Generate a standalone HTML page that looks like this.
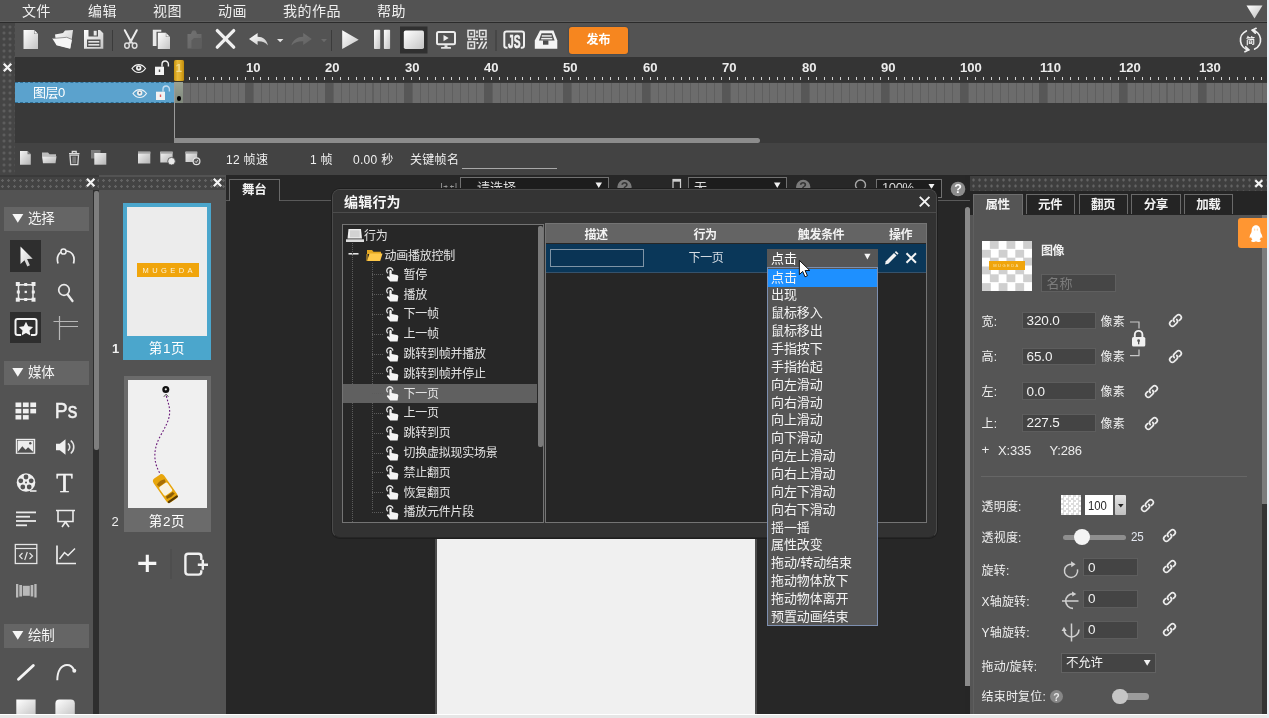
<!DOCTYPE html>
<html lang="zh-CN">
<head>
<meta charset="utf-8">
<title>Mugeda</title>
<style>
*{box-sizing:border-box;margin:0;padding:0}
html,body{width:1269px;height:718px;overflow:hidden;background:#262626}
body{filter:blur(.55px);font-family:"Liberation Sans","Noto Sans CJK SC",sans-serif;font-size:12px;color:#e6e6e6;position:relative}
.a{position:absolute}
.t{position:absolute;white-space:nowrap;line-height:1}
svg{position:absolute;overflow:visible}
/* dotted grip pattern */
.dots{background-color:#454545;background-image:radial-gradient(circle at 1.500px 1.500px,#636363 1px,transparent 1.500px);background-size:6px 6px}
.mn{top:4px;font-size:14px;color:#f0f0f0;letter-spacing:0.5px}
.fl{top:60.500px;font-size:13.500px;font-weight:bold;color:#ececec;transform:scaleX(.97);transform-origin:0 0}
.tb2{top:153.500px;font-size:12px;color:#f0f0f0;letter-spacing:0.3px}
.sh{left:4px;width:85px;height:24px;background:#656565}
.sht{left:28px;font-size:13.500px;color:#f4f4f4;letter-spacing:-0.3px}
.sb{background:#1d1d1d;border:1px solid #707070}
.q{width:14px;text-align:center;font-size:12.500px;font-weight:bold}
.ti{font-size:12px;color:#e4e4e4;letter-spacing:-0.25px}
.hd{height:1px;background:repeating-linear-gradient(90deg,#5c5c5c 0,#5c5c5c 1px,transparent 1px,transparent 2px)}
.vd{width:1px;background:repeating-linear-gradient(#5c5c5c 0,#5c5c5c 1px,transparent 1px,transparent 2px)}
.th{top:229px;width:60px;text-align:center;font-size:12px;font-weight:bold;color:#f2f2f2;letter-spacing:-0.4px}
.op{left:767.500px;width:109.500px;height:17.860px;line-height:17.500px;padding-left:3.500px;font-size:13px;color:#f4f4f4;white-space:nowrap;letter-spacing:-0.1px}
.op.sel{background:#1e90ff;height:18.500px}
.pl{left:981.500px;font-size:12px;color:#efefef;letter-spacing:0.2px}
.pin{background:#444;border:1px solid #5d5d5d}
.pv{font-size:13.500px;color:#f2f2f2;letter-spacing:-0.1px}
</style>
</head>
<body>
<!-- ===== MENU BAR ===== -->
<div class="a" id="menubar" style="left:0;top:0;width:1267px;height:23px;background:#535353;border-bottom:1px solid #2b2b2b;box-shadow:inset 0 -2px 0 -1px #5e5e5e"></div>
<div class="t mn" style="left:22px">文件</div>
<div class="t mn" style="left:88px">编辑</div>
<div class="t mn" style="left:153px">视图</div>
<div class="t mn" style="left:218px">动画</div>
<div class="t mn" style="left:283px">我的作品</div>
<div class="t mn" style="left:377px">帮助</div>
<svg style="left:1246px;top:5px" width="17" height="14" viewBox="0 0 17 14"><defs><linearGradient id="gw" x1="0" y1="0" x2="1" y2="1"><stop offset="0" stop-color="#fff"/><stop offset="1" stop-color="#bdbdbd"/></linearGradient></defs><path d="M0.5 0.5h16L8.5 13.5z" fill="url(#gw)"/></svg>
<!-- ===== TOOLBAR ===== -->
<div class="a" id="toolbar" style="left:0;top:23px;width:1267px;height:34px;background:#535353"></div>
<svg id="tbicons" style="left:0;top:23px" width="1267" height="34" viewBox="0 23 1267 34">
<defs>
<linearGradient id="gi" x1="0" y1="0" x2="1" y2="1"><stop offset="0" stop-color="#ffffff"/><stop offset="0.5" stop-color="#e2e2e2"/><stop offset="1" stop-color="#c4c4c4"/></linearGradient>
<linearGradient id="gd" x1="0" y1="0" x2="1" y2="1"><stop offset="0" stop-color="#737373"/><stop offset="1" stop-color="#636363"/></linearGradient>
</defs>
<!-- new -->
<path d="M23.5 30h10.5l4 4v15h-14.5z" fill="url(#gi)"/><path d="M34 30v4h4z" fill="#8a8a8a"/><path d="M34.6 30.4l3 3.2h-3z" fill="#f4f4f4"/>
<!-- open -->
<path d="M55 34.5l8-1.5 2-2.500 8-0.5-2.500 18.500-14-3.500z" fill="url(#gi)"/><path d="M52.300 38.500l14.500-1.200 5.200 2.200-2 9.200-13.500-3.400z" fill="#f6f6f6"/><path d="M52.300 38.500l14.500-1.200 5.200 2.200" fill="none" stroke="#8a8a8a" stroke-width="0.900"/>
<!-- save -->
<path d="M84 30h16l3.300 3.300v15.400h-19.300z" fill="url(#gi)"/><rect x="88.500" y="30" width="9.500" height="6.500" fill="#535353"/><rect x="93.700" y="30.800" width="3" height="4.700" fill="#e8e8e8"/><rect x="87" y="39.500" width="13.500" height="7.500" fill="#535353"/><rect x="88.300" y="41" width="11" height="1.600" fill="#e0e0e0"/><rect x="88.300" y="44" width="11" height="1.600" fill="#e0e0e0"/>
<rect x="112" y="30" width="1" height="21" fill="#3b3b3b"/>
<!-- scissors -->
<path d="M124.800 30.200l6.600 12.300M136.800 30.200l-6.600 12.300" stroke="#ececec" stroke-width="2" fill="none" stroke-linecap="round"/><ellipse cx="127" cy="45.600" rx="2.300" ry="2.600" fill="none" stroke="#dcdcdc" stroke-width="1.500"/><ellipse cx="134.600" cy="45.600" rx="2.300" ry="2.600" fill="none" stroke="#dcdcdc" stroke-width="1.500"/><path d="M128.600 43.500l2.200-2.500 2.200 2.500" stroke="#dcdcdc" stroke-width="1.400" fill="none"/>
<!-- copy -->
<path d="M152.800 29.700h8.500v2h-4.800v14.300h-3.700z" fill="#e9e9e9"/><path d="M157.800 32.800h8l4.200 4.200v12h-12.200z" fill="url(#gi)"/><path d="M165.800 32.800v4.200h4.200z" fill="#8a8a8a"/><path d="M166.400 33.400l3 3h-3z" fill="#f2f2f2"/>
<!-- paste (disabled) -->
<path d="M187.500 34h3.500l1-2.800h4l1 2.800h4.500v14.500h-14z" fill="url(#gd)"/><rect x="192.500" y="30.500" width="3" height="2" fill="#6c6c6c"/><path d="M194 38h7v10.500h-9.500v-8z" fill="#5d5d5d"/>
<!-- delete X -->
<path d="M217.300 30.600l16.400 16.600M233.700 30.600l-16.400 16.600" stroke="#f0f0f0" stroke-width="3.300" stroke-linecap="round"/>
<!-- undo -->
<path d="M249 39l8.600-5.900v3.700c5.400 0 9.300 3 10.300 8.600-2.600-3.100-5.700-4.300-10.300-4.100v3.800z" fill="url(#gi)"/>
<path d="M277 39h6.400l-3.200 3.300z" fill="#e4e4e4"/>
<!-- redo (disabled) -->
<path d="M311.800 39l-8.600-5.900v3.700c-5.400 0-10.300 3-11.800 8.600 3.100-3.100 7.200-4.300 11.800-4.100v3.800z" fill="url(#gd)"/>
<path d="M321 39h6l-3 3.200z" fill="#6a6a6a"/>
<rect x="331" y="30" width="1" height="21" fill="#3b3b3b"/>
<!-- play -->
<path d="M342.200 30.300l16.500 9.400-16.500 9.400z" fill="url(#gi)"/>
<!-- pause -->
<rect x="374" y="29.700" width="6.200" height="19.400" rx="0.800" fill="url(#gi)"/><rect x="383.900" y="29.700" width="6.200" height="19.400" rx="0.800" fill="url(#gi)"/>
<!-- stop -->
<rect x="400" y="26.500" width="27.500" height="27" fill="#303030"/><rect x="403.800" y="30.600" width="20.200" height="18.500" rx="1.800" fill="url(#gi)"/>
<!-- preview -->
<rect x="437" y="32" width="18" height="12.200" rx="1.500" fill="none" stroke="#ececec" stroke-width="2"/><path d="M443.500 35l5.200 3.100-5.200 3.100z" fill="#ececec"/><rect x="444.500" y="45.200" width="3" height="1.800" fill="#e4e4e4"/><rect x="441" y="47" width="10" height="1.700" rx="0.500" fill="#e4e4e4"/>
<!-- qr -->
<g fill="none" stroke="#e6e6e6" stroke-width="1.500"><rect x="468" y="30.400" width="6.500" height="6.500"/><rect x="479.500" y="30.400" width="6.500" height="6.500"/><rect x="468" y="42" width="6.500" height="6.500"/></g>
<g fill="#e6e6e6"><rect x="470.300" y="32.700" width="2" height="2"/><rect x="481.800" y="32.700" width="2" height="2"/><rect x="470.300" y="44.300" width="2" height="2"/><rect x="476.200" y="30.500" width="1.600" height="3"/><rect x="476.200" y="35" width="1.600" height="2"/><rect x="468" y="38.400" width="3.500" height="1.700"/><rect x="473" y="38.400" width="5" height="1.700"/><rect x="480" y="38.400" width="3" height="1.700"/><rect x="484.500" y="38.400" width="2.300" height="1.700"/><path d="M477.500 48.700l4-7.200h2l-4 7.200zM481.500 48.700l4-7.200h1.500v1l-3.500 6.200zM485.300 48.700l1.500-3v3z"/><rect x="476.500" y="42" width="2" height="2"/></g>
<rect x="495.500" y="30" width="1" height="21" fill="#3b3b3b"/>
<!-- JS -->
<path d="M507.500 47.700h-1q-2.200 0-2.200-2.200v-11.700q0-2.200 2.200-2.200h15.300q2.200 0 2.200 2.200v11.700q0 2.200-2.200 2.200h-1" fill="none" stroke="#efefef" stroke-width="2"/>
<text transform="translate(514.300 48.200) scale(.55 1)" text-anchor="middle" font-family="Liberation Sans,sans-serif" font-weight="bold" font-size="18.500" fill="#f2f2f2" stroke="#f2f2f2" stroke-width="0.700">JS</text>
<!-- drawer -->
<path d="M540 30.600h13.500l3.800 10v8.100h-22.500v-8.100z" fill="#f4f4f4"/><path d="M541.500 33.300h10.500l2.600 7.300h-15.700z" fill="#535353"/><rect x="541.800" y="35.200" width="9.900" height="1.500" fill="#ececec"/><rect x="541.200" y="37.900" width="11.100" height="1.500" fill="#ececec"/><rect x="543" y="40.400" width="5.400" height="4.300" fill="#4c4c4c"/>
<!-- right: simplified/traditional toggle -->
<g fill="none" stroke="#f0f0f0" stroke-width="1.700" stroke-linecap="round" stroke-linejoin="round"><path d="M1246.300 30.900A10 10 0 0 0 1248.760 49.850"/><path d="M1254.700 49.100A10 10 0 0 0 1252.240 30.150"/><path d="M1244.900 51.700L1248.760 49.850L1245.700 46.800"/><path d="M1256.100 28.300L1252.240 30.150L1255.300 33.200"/></g>
<text x="1250.600" y="43.600" text-anchor="middle" font-family="Liberation Sans,Noto Sans CJK SC,sans-serif" font-size="9" font-weight="bold" fill="#f0f0f0">简</text>
</svg>
<div class="a" style="left:569px;top:26.500px;width:59px;height:27px;background:#f6861f;border-radius:3px;box-shadow:0 0 2px rgba(30,40,60,.6)"></div>
<div class="t" style="left:569px;top:34px;width:59px;text-align:center;font-size:12px;font-weight:bold;color:#fff">发布</div>
<!-- ===== TIMELINE ===== -->
<div class="a" id="timeline" style="left:0;top:57px;width:1267px;height:86px;background:#393939"></div>
<div class="a" style="left:15px;top:57px;width:1252px;height:25px;background:#343434"></div>
<div class="a" style="left:15px;top:102px;width:159px;height:41px;background:#393939"></div>
<!-- ticks -->
<div class="a" style="left:189.400px;top:77px;width:1077.600px;height:3px;background:repeating-linear-gradient(90deg,#d2d2d2 0,#d2d2d2 1px,transparent 1px,transparent 7.940px)"></div>
<div class="t fl" style="left:245.8px">10</div><div class="t fl" style="left:325.2px">20</div><div class="t fl" style="left:404.6px">30</div><div class="t fl" style="left:484.0px">40</div><div class="t fl" style="left:563.4px">50</div><div class="t fl" style="left:642.8px">60</div><div class="t fl" style="left:722.2px">70</div><div class="t fl" style="left:801.6px">80</div><div class="t fl" style="left:881.0px">90</div><div class="t fl" style="left:960.4px">100</div><div class="t fl" style="left:1039.8px">110</div><div class="t fl" style="left:1119.2px">120</div><div class="t fl" style="left:1198.6px">130</div>

<!-- frames row -->
<div class="a" style="left:174px;top:82.500px;width:1093px;height:20px;background:repeating-linear-gradient(90deg,#5f5f5f 0,#5f5f5f 1px,#6c6c6c 1px,#6c6c6c 7.940px)"></div>
<div class="a" style="left:174px;top:82.500px;width:1093px;height:20px;background:repeating-linear-gradient(90deg,transparent 0,transparent 71.460px,#575757 71.460px,#575757 79.400px)"></div>
<div class="a" style="left:175px;top:82px;width:8px;height:21px;background:linear-gradient(#9aa394,#7e877b)"></div>
<div class="a" style="left:176.500px;top:96px;width:4.500px;height:4.500px;border-radius:50%;background:#000"></div>
<div class="a" style="left:174px;top:82px;width:1px;height:61px;background:#9a9a9a"></div>
<!-- layer row -->
<div class="a" style="left:15px;top:82px;width:159px;height:21px;background:#5ba2cd;border-top:1px dashed #2f6f96;border-bottom:1px dashed #2f6f96"></div>
<div class="t" style="left:33px;top:86px;font-size:13px;color:#fff;letter-spacing:-0.5px">图层0</div>
<!-- playhead -->
<div class="a" style="left:174px;top:60px;width:9.500px;height:21px;background:linear-gradient(90deg,#c8940f,#e8b93a 35%,#e2b02c 60%,#c08c0c);border-radius:1.500px;box-shadow:0 0 1px #6b5208"></div>
<div class="t" style="left:174px;top:63px;width:9.500px;text-align:center;font-size:11px;color:#f3dc8e;font-weight:bold">1</div>
<!-- close + eye/lock icons -->
<svg style="left:0;top:57px" width="180" height="50" viewBox="0 57 180 50">
<g id="eye"><path d="M132 68.500c3.500-5.300 10-5.300 13.500 0-3.500 5.300-10 5.300-13.500 0z" fill="none" stroke="#f0f0f0" stroke-width="1.200"/><circle cx="138.700" cy="68" r="2.700" fill="#f0f0f0"/><circle cx="138.700" cy="67.800" r="1" fill="#333"/></g>
<g id="lock"><rect x="155" y="66.700" width="9" height="8.300" fill="#f2f2f2"/><path d="M162 66.700v-2.500a3.200 3.200 0 0 1 6.400 0v2.300" fill="none" stroke="#f2f2f2" stroke-width="1.400"/><rect x="158.800" y="69.500" width="1.400" height="2.500" fill="#555"/></g>
<g transform="translate(1,25)"><path d="M132 68.500c3.500-5.300 10-5.300 13.500 0-3.500 5.300-10 5.300-13.500 0z" fill="none" stroke="#e8f0f6" stroke-width="1.200"/><circle cx="138.700" cy="68" r="2.700" fill="#f0f0f0"/><circle cx="138.700" cy="67.800" r="1" fill="#567"/></g>
<g transform="translate(1,25)"><rect x="155" y="66.700" width="9" height="8.300" fill="#f2f2f2"/><path d="M162 66.700v-2.500a3.200 3.200 0 0 1 6.400 0v2.300" fill="none" stroke="#c4dcf0" stroke-width="1.400"/><rect x="158.800" y="69.500" width="1.400" height="2.500" fill="#e05a5a"/></g>
</svg>
<!-- h scrollbar -->
<div class="a" style="left:174px;top:138px;width:586px;height:5px;background:#8c8c8c;border-radius:0 3px 3px 0"></div>
<!-- bottom bar -->
<div class="a" id="tlbar" style="left:0;top:143px;width:1267px;height:32px;background:#434343"></div>
<div class="a dots" style="left:0;top:23px;width:15px;height:152px;background-position:2.500px 2.500px"></div>
<svg style="left:0;top:60px" width="15" height="15" viewBox="0 60 15 15"><path d="M3.800 63.800l7.400 7.400M11.200 63.800l-7.400 7.400" stroke="#f4f4f4" stroke-width="2.300"/></svg>
<!-- timeline bottom bar content -->
<svg style="left:0;top:143px" width="220" height="32" viewBox="0 143 220 32">
<defs><linearGradient id="gs" x1="0" y1="0" x2="1" y2="1"><stop offset="0" stop-color="#f4f4f4"/><stop offset="1" stop-color="#b4b4b4"/></linearGradient></defs>
<path d="M20 151h7.500l3.300 3.300v10.500h-10.800z" fill="url(#gs)"/><path d="M27.500 151v3.300h3.300z" fill="#777"/>
<path d="M42 152.500h6l1.500 1.700h6.500v2h-14z" fill="#bdbdbd"/><path d="M42 156.200h14.500l-1 7h-12.500z" fill="url(#gs)"/>
<path d="M69 153.600h10.500M72.300 153.300v-1.800h3.900v1.800" fill="none" stroke="#dadada" stroke-width="1.300"/><path d="M70 155.200h8.500l-0.700 9.500h-7.100z" fill="none" stroke="#dadada" stroke-width="1.300"/><rect x="72.300" y="156.500" width="3.900" height="7" fill="#777"/>
<rect x="91" y="150" width="9.500" height="8.500" fill="#7c7c7c"/><rect x="94.300" y="153" width="12" height="11.700" fill="url(#gs)"/>
<rect x="138" y="151.700" width="12.300" height="11.800" fill="url(#gs)"/><rect x="138" y="151.700" width="12.300" height="2" fill="#a5a5a5"/>
<rect x="160.300" y="151.700" width="12.300" height="10.800" fill="url(#gs)"/><rect x="160.300" y="151.700" width="12.300" height="2" fill="#a5a5a5"/><circle cx="171.500" cy="161.200" r="3.800" fill="#e8e8e8" stroke="#474747" stroke-width="0.800"/>
<rect x="185.500" y="151.700" width="11.700" height="10.300" fill="url(#gs)"/><rect x="185.500" y="151.700" width="11.700" height="2" fill="#a5a5a5"/><circle cx="196.500" cy="161.200" r="3.400" fill="#555" stroke="#e2e2e2" stroke-width="1.200"/><path d="M195 161.300l1.200 1.200 1.800-2.600" fill="none" stroke="#ddd" stroke-width="0.900"/>
</svg>
<div class="t tb2" style="left:226px">12 帧速</div>
<div class="t tb2" style="left:310px">1 帧</div>
<div class="t tb2" style="left:353px">0.00 秒</div>
<div class="t tb2" style="left:410px">关键帧名</div>
<div class="a" style="left:462px;top:168px;width:95px;height:1px;background:#a8a8a8"></div>
<!-- ===== MAIN ===== -->
<div class="a" id="main" style="left:0;top:175px;width:1267px;height:540px;background:#262626"></div>
<!-- left tool panel -->
<div class="a" style="left:0;top:175px;width:99px;height:540px;background:#3a3a3a"></div>
<div class="a dots" style="left:0;top:176.500px;width:99px;height:13.500px;background-color:#434343;background-position:1px 2px"></div>
<div class="a" style="left:0;top:190px;width:93px;height:525px;background:#535353"></div>
<div class="a" style="left:93px;top:190px;width:6px;height:525px;background:#2e2e2e"></div><div class="a" style="left:93.500px;top:191px;width:5px;height:258.500px;background:#7e7e7e;border-radius:2px"></div>
<div class="a sh" style="top:207px"></div><div class="t sht" style="top:212px">选择</div>
<div class="a sh" style="top:361px"></div><div class="t sht" style="top:366px">媒体</div>
<div class="a sh" style="top:624px"></div><div class="t sht" style="top:629px">绘制</div>
<div class="a" style="left:10px;top:240px;width:31px;height:32px;background:#2e2e2e"></div>
<div class="a" style="left:10px;top:312px;width:31px;height:31px;background:#2e2e2e"></div>
<svg id="tools" style="left:0;top:176px" width="99" height="539" viewBox="0 176 99 539">
<g stroke="#f4f4f4" stroke-width="2.200"><path d="M87 178.800l7.400 7.400M94.400 178.800l-7.400 7.400"/></g>
<g fill="#f6f6f6"><path d="M12.300 214h11l-5.500 8.800z"/><path d="M12.300 368h11l-5.500 8.800z"/><path d="M12.300 631h11l-5.500 8.800z"/></g>
<!-- arrow -->
<path d="M20.500 246.500v17.500l4-3.800 2.800 6.300 2.600-1.200-2.800-6.200 5.600-0.300z" fill="url(#gi)"/>
<!-- node tool -->
<path d="M58 263.500c-2-7 1-12.500 7.500-12.500s10 5 8 12.500" fill="none" stroke="#eee" stroke-width="1.700"/><circle cx="63.500" cy="251.500" r="2.600" fill="#535353" stroke="#eee" stroke-width="1.500"/>
<!-- transform -->
<rect x="18.500" y="284.800" width="14.500" height="14.500" fill="none" stroke="#eee" stroke-width="1.500"/><g fill="#eee"><rect x="15.800" y="282" width="4" height="4"/><rect x="31.500" y="282" width="4" height="4"/><rect x="15.800" y="297.700" width="4" height="4"/><rect x="31.500" y="297.700" width="4" height="4"/><rect x="24.200" y="283" width="3" height="3"/><rect x="24.200" y="298" width="3" height="3"/><rect x="16.800" y="290.500" width="3" height="3"/><rect x="31.800" y="290.500" width="3" height="3"/><rect x="24.600" y="290.800" width="2.300" height="2.300"/></g>
<!-- magnifier -->
<circle cx="64" cy="290" r="5.300" fill="none" stroke="#eaeaea" stroke-width="1.700"/><path d="M67.800 294.800l4.700 6.200" stroke="#eaeaea" stroke-width="2.300" stroke-linecap="round"/>
<!-- star frame -->
<path d="M21 319h-3.500q-2 0-2 2v12q0 2 2 2h3.500M31 319h3.500q2 0 2 2v12q0 2-2 2h-3.500" fill="none" stroke="#f2f2f2" stroke-width="2"/><path d="M20 319h12" stroke="#f2f2f2" stroke-width="2"/><path d="M26 321.800l2.200 4.500 4.900 0.700-3.600 3.500 0.900 4.900-4.400-2.300-4.400 2.300 0.900-4.900-3.600-3.500 4.900-0.700z" fill="#f4f4f4"/>
<!-- guides -->
<path d="M59.500 316v24M53.500 321.500h24.500M59.500 326.500h18.500" fill="none" stroke="#b8b8b8" stroke-width="1.200"/>
<!-- grid -->
<g fill="#f0f0f0"><rect x="15.500" y="402.500" width="5.800" height="4.600"/><rect x="22.900" y="402.500" width="5.800" height="4.600"/><rect x="30.300" y="402.500" width="5.800" height="4.600"/><rect x="15.500" y="408.800" width="5.800" height="4.600"/><rect x="22.900" y="408.800" width="5.800" height="4.600"/><rect x="30.300" y="408.800" width="5.800" height="4.600"/><rect x="15.500" y="415.100" width="5.800" height="4.400"/><rect x="22.900" y="415.100" width="5.800" height="4.400"/></g>
<text transform="translate(54.800 418) scale(.9 1)" font-family="Liberation Sans,sans-serif" font-size="21.500" fill="#f0f0f0" stroke="#f0f0f0" stroke-width="0.500">Ps</text>
<!-- image -->
<rect x="15.800" y="438.800" width="19.400" height="15" fill="#ededed"/><path d="M17.500 452.200l4.800-6 3.300 3.600 2.500-2.500 5.500 4.900z" fill="#4f4f4f"/><rect x="17.300" y="440.300" width="16.400" height="12" fill="none" stroke="#4f4f4f" stroke-width="0.600"/><circle cx="30.300" cy="443.300" r="1.200" fill="#4f4f4f"/>
<!-- sound -->
<path d="M56 443.800h3.800l5.700-4.600v15.600l-5.700-4.600h-3.800z" fill="#f0f0f0"/><path d="M68 443.300a4.800 4.800 0 0 1 0 7.400M70.800 440.500a8.600 8.600 0 0 1 0 13" fill="none" stroke="#e6e6e6" stroke-width="1.600"/>
<!-- film reel -->
<circle cx="26" cy="482.500" r="9.300" fill="#f0f0f0"/><g fill="#535353"><circle cx="26" cy="477" r="2.400"/><circle cx="20.800" cy="480.800" r="2.400"/><circle cx="31.200" cy="480.800" r="2.400"/><circle cx="22.800" cy="487" r="2.400"/><circle cx="29.200" cy="487" r="2.400"/><circle cx="26" cy="482.500" r="1"/></g><path d="M30 491h6.500" stroke="#f0f0f0" stroke-width="1.600"/>
<text x="56.300" y="491.600" font-family="Liberation Serif,serif" font-size="27" fill="#f2f2f2" stroke="#f2f2f2" stroke-width="0.400">T</text>
<!-- text lines -->
<g fill="#eaeaea"><rect x="16" y="511.500" width="20" height="1.800"/><rect x="16" y="515.800" width="14" height="1.800"/><rect x="16" y="520.100" width="20" height="1.800"/><rect x="16" y="524.400" width="11" height="1.800"/></g>
<!-- presentation -->
<path d="M56 510.500h19M58 511v10.500h15v-10.500M62 527l3.500-5 3.500 5" fill="none" stroke="#ececec" stroke-width="1.600"/>
<!-- code -->
<rect x="15.300" y="544.500" width="21.500" height="19" fill="none" stroke="#e4e4e4" stroke-width="1.300"/><path d="M15.300 548.500h21.500" stroke="#e4e4e4" stroke-width="1.200"/><path d="M22.500 553l-3 3 3 3M29.500 553l3 3-3 3M27.300 552l-2.600 8" fill="none" stroke="#e4e4e4" stroke-width="1.200"/>
<!-- chart -->
<path d="M57 545.500v18h19" fill="none" stroke="#ececec" stroke-width="1.700"/><path d="M59.500 559l5-6.500 3.500 3 7-7" fill="none" stroke="#ececec" stroke-width="1.500"/>
<!-- film strip -->
<g fill="#b9b9b9"><rect x="16" y="584" width="2.300" height="13.500"/><rect x="19.300" y="585" width="2.700" height="11.500"/><rect x="22.800" y="585.800" width="7" height="10"/><rect x="30.600" y="585" width="2.700" height="11.500"/><rect x="34.300" y="584" width="2.300" height="13.500"/></g>
<!-- line / curve -->
<path d="M18.500 679.300l14.800-13.800" stroke="#f4f4f4" stroke-width="2.900" stroke-linecap="round"/>
<path d="M57.300 680.300c0-9.500 4-15.300 9.700-15.300 3.500 0 5.800 2 7 5.300" fill="none" stroke="#f0f0f0" stroke-width="1.900"/><circle cx="74.300" cy="670.800" r="2" fill="#f0f0f0"/>
<rect x="16.300" y="699.500" width="19.300" height="16" fill="url(#gi)"/><path d="M55.400 715.500v-12q0-4 4-4h11.400q4 0 4 4v12z" fill="url(#gi)"/>
</svg>
<!-- pages panel -->
<div class="a" style="left:99px;top:175px;width:127px;height:540px;background:#535353"></div>
<div class="a dots" style="left:99px;top:176.500px;width:126px;height:13.500px;background-color:#434343;background-position:3px 2px"></div>
<svg style="left:212px;top:177px" width="12" height="12" viewBox="0 0 12 12"><path d="M1.800 1.800l7.400 7.400M9.200 1.800l-7.400 7.400" stroke="#f4f4f4" stroke-width="2.200"/></svg>
<!-- page 1 -->
<div class="a" style="left:123px;top:203px;width:88px;height:157px;background:#4ba6cc"></div>
<div class="a" style="left:127px;top:207px;width:80px;height:129px;background:#ececec"></div>
<div class="a" style="left:136.500px;top:263px;width:62.500px;height:14px;background:#f0a50c"></div>
<div class="t" style="left:136.500px;top:266.500px;width:62.500px;text-align:center;font-size:7.500px;letter-spacing:3.400px;color:#fdf3d6;padding-left:3px">MUGEDA</div>
<div class="t" style="left:123px;top:342px;width:88px;text-align:center;font-size:13.500px;color:#fff;letter-spacing:0.6px">第1页</div>
<div class="t" style="left:112px;top:342px;font-size:13px;font-weight:bold;color:#f0f0f0">1</div>
<!-- page 2 -->
<div class="a" style="left:123.500px;top:376px;width:87px;height:155.500px;background:#6b6b6b"></div>
<div class="a" style="left:127.500px;top:380px;width:79px;height:127.500px;background:#f0f0f0"></div>
<svg style="left:127px;top:379px" width="80" height="129" viewBox="127 379 80 129">
<circle cx="165.800" cy="389.500" r="3.500" fill="#111"/><circle cx="165.800" cy="389.300" r="1.100" fill="#eee"/>
<path d="M166.300 396c1.500 6 3.800 11 3.300 17.500-0.500 7.500-5 14.500-9.500 23-4 7.500-6 15-5 23 0.500 5 2.500 10 5.500 15" fill="none" stroke="#6a1a7a" stroke-width="1.100" stroke-dasharray="1.800 1.800"/>
<path d="M163.800 396.800l2.300-2.600 2.300 2.600" fill="none" stroke="#222" stroke-width="0.800"/>
<g transform="rotate(-35 165.300 488.500)"><rect x="158.800" y="474" width="13" height="29" rx="3.500" fill="#e8a60c"/><rect x="160.300" y="484" width="10" height="10.500" rx="1.500" fill="#f8f3e2"/><path d="M160.500 480.500q4.800-2.200 9.600 0l-0.800 3h-8z" fill="#a87006"/><path d="M161.300 495.500h8l0.800 2.600q-4.800 1.600-9.600 0z" fill="#8d5f05"/><rect x="159.300" y="500.500" width="12" height="2.300" rx="1" fill="#5a3c04"/></g>
</svg>
<div class="t" style="left:123px;top:515px;width:88px;text-align:center;font-size:13.500px;color:#fff;letter-spacing:0.6px">第2页</div>
<div class="t" style="left:111.500px;top:515px;font-size:13px;color:#f0f0f0">2</div>
<svg style="left:130px;top:545px" width="85" height="40" viewBox="130 545 85 40">
<path d="M147.300 554.800v17.200M138.300 563.400h18" stroke="#f6f6f6" stroke-width="3.100"/>
<path d="M171 549v30" stroke="#4a4a4a" stroke-width="1"/>
<path d="M201.300 560v-3.500q0-2.800-2.800-2.800h-10.300q-2.800 0-2.800 2.800v15.300q0 2.800 2.800 2.800h10.300q2.800 0 2.800-2.800v-1.500" fill="none" stroke="#f0f0f0" stroke-width="2.400"/><path d="M202.800 559.800v10M197.800 564.800h10.200" stroke="#f0f0f0" stroke-width="2.400"/>
</svg>
<!-- ===== STAGE ===== -->
<div class="a" style="left:226px;top:175px;width:739px;height:540px;background:#272727"></div>
<div class="a" style="left:226px;top:199.500px;width:744px;height:1px;background:#5a5a5a"></div>
<div class="a" style="left:229px;top:179px;width:50.500px;height:21.500px;background:#272727;border:1px solid #696969;border-bottom:none"></div>
<div class="t" style="left:229px;top:184px;width:50.500px;text-align:center;font-size:12.500px;font-weight:bold;color:#f2f2f2;letter-spacing:-0.3px">舞台</div>
<!-- stage toolbar -->
<div class="a sb" style="left:460px;top:177px;width:149px;height:22px"></div>
<div class="t" style="left:477px;top:180.500px;font-size:13px;color:#dcdcdc">请选择</div>
<div class="a sb" style="left:688px;top:177px;width:99px;height:22px"></div>
<div class="t" style="left:694px;top:180.500px;font-size:13px;color:#dcdcdc">无</div>
<div class="a sb" style="left:876px;top:179px;width:66px;height:19px"></div>
<div class="t" style="left:882px;top:181px;font-size:13px;color:#dcdcdc;letter-spacing:-0.4px">100%</div>
<svg style="left:440px;top:176px" width="530" height="24" viewBox="440 176 530 24">
<path d="M441.500 183v7M456 183v7M443.500 186.500h4M450 186.500h4" stroke="#8a8a8a" stroke-width="1"/>
<path d="M446.500 185l-2 1.500 2 1.500zM451 185l2 1.500-2 1.500z" fill="#9a9a9a"/>
<rect x="673" y="179.500" width="7.500" height="12" fill="none" stroke="#cfcfcf" stroke-width="1.200"/><rect x="673" y="179.500" width="7.500" height="2.200" fill="#cfcfcf"/>
<circle cx="624.500" cy="187" r="7.200" fill="#7a7a7a"/><circle cx="803.200" cy="187" r="7.200" fill="#7a7a7a"/><circle cx="958" cy="189" r="7.300" fill="#8c8c8c"/>
<circle cx="860.500" cy="185" r="5" fill="none" stroke="#a8a8a8" stroke-width="1.400"/><path d="M864 189l3 3.500" stroke="#a8a8a8" stroke-width="1.600"/>
<path d="M595.500 182.500h6.500l-3.250 5.500zM774 182.500h6.500l-3.250 5.500zM928.500 184h6l-3 5z" fill="#f0f0f0"/>
</svg>
<div class="t q" style="left:617.500px;top:180.500px;color:#333">?</div><div class="t q" style="left:796.200px;top:180.500px;color:#333">?</div><div class="t q" style="left:951px;top:182.500px;color:#fff">?</div>
<!-- stage scrollbar -->
<div class="a" style="left:965px;top:207px;width:5px;height:479px;background:#8a8a8a;border-radius:2.500px 2.500px 0 0"></div>
<!-- canvas -->
<div class="a" style="left:434.500px;top:538px;width:322.500px;height:177px;background:#4c4c4c"></div><div class="a" style="left:437px;top:538px;width:318px;height:177px;background:#f0f0f0"></div>
<!-- ===== DIALOG ===== -->
<div class="a" id="dlg" style="left:332px;top:188.500px;width:605px;height:349px;background:#323232;border:1px solid #4a4a4a;border-bottom-color:#262626;border-radius:8px;box-shadow:0 0 0 1px #1e1e1e"></div>
<div class="a" style="left:333px;top:189.500px;width:603px;height:23.500px;background:#343434;border-radius:7px 7px 0 0;border-bottom:1px solid #4c4c4c"></div>
<div class="t" style="left:344px;top:194.500px;font-size:14px;font-weight:bold;color:#f6f6f6;letter-spacing:0.2px">编辑行为</div>
<svg style="left:918px;top:195px" width="14" height="14" viewBox="0 0 14 14"><path d="M1.800 1.800l9.600 9.600M11.400 1.800l-9.600 9.600" stroke="#f4f4f4" stroke-width="1.900"/></svg>
<!-- tree -->
<div class="a" style="left:342px;top:223.500px;width:202px;height:299px;background:#272727;border:1px solid #747474"></div>
<div class="a" style="left:538px;top:226px;width:4.500px;height:221px;background:#7a7a7a;border-radius:2px"></div>
<svg style="left:345px;top:228px" width="40" height="34" viewBox="345 228 40 34">
<path d="M348.500 229h12.500l1 9.500h-14.500z" fill="#efefef"/><path d="M346 239.300h18v2.700h-18z" fill="#dedede"/><rect x="350" y="230.300" width="9.700" height="7" fill="#d2d2d2"/>
<path d="M348.500 253.800h10" stroke="#f0f0f0" stroke-width="1.500"/>
<path d="M367 250h5l1.500 1.800h7.500v2.200h-14z" fill="#e5a823"/><path d="M369.500 253.500h13l-2.300 7.500h-13.200z" fill="#ffc94a"/><path d="M367 254v7" stroke="#e5a823" stroke-width="1"/>
</svg>
<div class="a vd" style="left:352px;top:243px;height:279px"></div>
<div class="a vd" style="left:372px;top:263px;height:248px"></div>
<div class="t ti" style="left:364px;top:229.5px">行为</div>
<div class="t ti" style="left:384.500px;top:249.5px">动画播放控制</div>
<div class="a hd" style="left:372px;top:274.3px;width:12px"></div><svg style="left:385px;top:267.3px" width="14" height="15" viewBox="0 0 14 15"><path d="M2.900 6.300a3.100 3.100 0 1 1 5-2.700" fill="none" stroke="#e4e4e4" stroke-width="1.300"/><path d="M5.200 14.500l-3.100-3.700c-0.800-1.100 0.700-2.100 1.600-1.200l0.700 0.700v-6.300c0-1.500 2.300-1.500 2.300 0v2.900l5.200 1c1.100 0.200 1.500 0.900 1.400 1.900l-0.700 4.700z" fill="#f4f4f4"/></svg><div class="t ti" style="left:403.500px;top:268.8px">暂停</div>
<div class="a hd" style="left:372px;top:294.1px;width:12px"></div><svg style="left:385px;top:287.1px" width="14" height="15" viewBox="0 0 14 15"><path d="M2.900 6.300a3.100 3.100 0 1 1 5-2.700" fill="none" stroke="#e4e4e4" stroke-width="1.300"/><path d="M5.200 14.500l-3.100-3.700c-0.800-1.100 0.700-2.100 1.600-1.200l0.700 0.700v-6.300c0-1.500 2.300-1.500 2.300 0v2.900l5.200 1c1.100 0.200 1.500 0.900 1.400 1.900l-0.700 4.700z" fill="#f4f4f4"/></svg><div class="t ti" style="left:403.500px;top:288.6px">播放</div>
<div class="a hd" style="left:372px;top:313.9px;width:12px"></div><svg style="left:385px;top:306.9px" width="14" height="15" viewBox="0 0 14 15"><path d="M2.900 6.300a3.100 3.100 0 1 1 5-2.700" fill="none" stroke="#e4e4e4" stroke-width="1.300"/><path d="M5.200 14.500l-3.100-3.700c-0.800-1.100 0.700-2.100 1.600-1.200l0.700 0.700v-6.300c0-1.500 2.300-1.500 2.300 0v2.900l5.200 1c1.100 0.200 1.500 0.900 1.400 1.900l-0.700 4.700z" fill="#f4f4f4"/></svg><div class="t ti" style="left:403.500px;top:308.4px">下一帧</div>
<div class="a hd" style="left:372px;top:333.7px;width:12px"></div><svg style="left:385px;top:326.7px" width="14" height="15" viewBox="0 0 14 15"><path d="M2.900 6.300a3.100 3.100 0 1 1 5-2.700" fill="none" stroke="#e4e4e4" stroke-width="1.300"/><path d="M5.200 14.500l-3.100-3.700c-0.800-1.100 0.700-2.100 1.600-1.200l0.700 0.700v-6.300c0-1.500 2.300-1.500 2.300 0v2.900l5.200 1c1.100 0.200 1.500 0.900 1.400 1.900l-0.700 4.700z" fill="#f4f4f4"/></svg><div class="t ti" style="left:403.500px;top:328.2px">上一帧</div>
<div class="a hd" style="left:372px;top:353.5px;width:12px"></div><svg style="left:385px;top:346.5px" width="14" height="15" viewBox="0 0 14 15"><path d="M2.900 6.300a3.100 3.100 0 1 1 5-2.700" fill="none" stroke="#e4e4e4" stroke-width="1.300"/><path d="M5.200 14.500l-3.100-3.700c-0.800-1.100 0.700-2.100 1.600-1.200l0.700 0.700v-6.300c0-1.500 2.300-1.500 2.300 0v2.900l5.200 1c1.100 0.200 1.500 0.900 1.400 1.900l-0.700 4.700z" fill="#f4f4f4"/></svg><div class="t ti" style="left:403.500px;top:348px">跳转到帧并播放</div>
<div class="a hd" style="left:372px;top:373.3px;width:12px"></div><svg style="left:385px;top:366.3px" width="14" height="15" viewBox="0 0 14 15"><path d="M2.900 6.300a3.100 3.100 0 1 1 5-2.700" fill="none" stroke="#e4e4e4" stroke-width="1.300"/><path d="M5.200 14.500l-3.100-3.700c-0.800-1.100 0.700-2.100 1.600-1.200l0.700 0.700v-6.300c0-1.500 2.300-1.500 2.300 0v2.900l5.200 1c1.100 0.200 1.500 0.900 1.400 1.900l-0.700 4.700z" fill="#f4f4f4"/></svg><div class="t ti" style="left:403.500px;top:367.8px">跳转到帧并停止</div>
<div class="a" style="left:343px;top:383.6px;width:194px;height:19px;background:#606060"></div>
<div class="a hd" style="left:372px;top:393.1px;width:12px"></div><svg style="left:385px;top:386.1px" width="14" height="15" viewBox="0 0 14 15"><path d="M2.900 6.300a3.100 3.100 0 1 1 5-2.700" fill="none" stroke="#e4e4e4" stroke-width="1.300"/><path d="M5.200 14.500l-3.100-3.700c-0.800-1.100 0.700-2.100 1.600-1.200l0.700 0.700v-6.300c0-1.500 2.300-1.500 2.300 0v2.900l5.200 1c1.100 0.200 1.500 0.900 1.400 1.900l-0.700 4.700z" fill="#f4f4f4"/></svg><div class="t ti" style="left:403.500px;top:387.6px">下一页</div>
<div class="a hd" style="left:372px;top:412.9px;width:12px"></div><svg style="left:385px;top:405.9px" width="14" height="15" viewBox="0 0 14 15"><path d="M2.900 6.300a3.100 3.100 0 1 1 5-2.700" fill="none" stroke="#e4e4e4" stroke-width="1.300"/><path d="M5.200 14.500l-3.100-3.700c-0.800-1.100 0.700-2.100 1.600-1.200l0.700 0.700v-6.300c0-1.500 2.300-1.500 2.300 0v2.900l5.200 1c1.100 0.200 1.500 0.900 1.400 1.900l-0.700 4.700z" fill="#f4f4f4"/></svg><div class="t ti" style="left:403.500px;top:407.4px">上一页</div>
<div class="a hd" style="left:372px;top:432.7px;width:12px"></div><svg style="left:385px;top:425.7px" width="14" height="15" viewBox="0 0 14 15"><path d="M2.900 6.300a3.100 3.100 0 1 1 5-2.700" fill="none" stroke="#e4e4e4" stroke-width="1.300"/><path d="M5.200 14.500l-3.100-3.700c-0.800-1.100 0.700-2.100 1.600-1.200l0.700 0.700v-6.300c0-1.500 2.300-1.500 2.300 0v2.900l5.200 1c1.100 0.200 1.500 0.900 1.400 1.900l-0.700 4.700z" fill="#f4f4f4"/></svg><div class="t ti" style="left:403.500px;top:427.2px">跳转到页</div>
<div class="a hd" style="left:372px;top:452.5px;width:12px"></div><svg style="left:385px;top:445.5px" width="14" height="15" viewBox="0 0 14 15"><path d="M2.900 6.300a3.100 3.100 0 1 1 5-2.700" fill="none" stroke="#e4e4e4" stroke-width="1.300"/><path d="M5.200 14.500l-3.100-3.700c-0.800-1.100 0.700-2.100 1.600-1.200l0.700 0.700v-6.300c0-1.500 2.300-1.500 2.300 0v2.900l5.200 1c1.100 0.200 1.500 0.900 1.400 1.900l-0.700 4.700z" fill="#f4f4f4"/></svg><div class="t ti" style="left:403.500px;top:447px">切换虚拟现实场景</div>
<div class="a hd" style="left:372px;top:472.3px;width:12px"></div><svg style="left:385px;top:465.3px" width="14" height="15" viewBox="0 0 14 15"><path d="M2.900 6.300a3.100 3.100 0 1 1 5-2.700" fill="none" stroke="#e4e4e4" stroke-width="1.300"/><path d="M5.200 14.500l-3.100-3.700c-0.800-1.100 0.700-2.100 1.600-1.200l0.700 0.700v-6.300c0-1.500 2.300-1.500 2.300 0v2.900l5.200 1c1.100 0.200 1.500 0.900 1.400 1.900l-0.700 4.700z" fill="#f4f4f4"/></svg><div class="t ti" style="left:403.500px;top:466.8px">禁止翻页</div>
<div class="a hd" style="left:372px;top:492.1px;width:12px"></div><svg style="left:385px;top:485.1px" width="14" height="15" viewBox="0 0 14 15"><path d="M2.900 6.300a3.100 3.100 0 1 1 5-2.700" fill="none" stroke="#e4e4e4" stroke-width="1.300"/><path d="M5.200 14.500l-3.100-3.700c-0.800-1.100 0.700-2.100 1.600-1.200l0.700 0.700v-6.300c0-1.500 2.300-1.500 2.300 0v2.900l5.200 1c1.100 0.200 1.500 0.900 1.400 1.900l-0.700 4.700z" fill="#f4f4f4"/></svg><div class="t ti" style="left:403.500px;top:486.6px">恢复翻页</div>
<div class="a hd" style="left:372px;top:511.9px;width:12px"></div><svg style="left:385px;top:504.9px" width="14" height="15" viewBox="0 0 14 15"><path d="M2.900 6.300a3.100 3.100 0 1 1 5-2.700" fill="none" stroke="#e4e4e4" stroke-width="1.300"/><path d="M5.200 14.500l-3.100-3.700c-0.800-1.100 0.700-2.100 1.600-1.200l0.700 0.700v-6.300c0-1.500 2.300-1.500 2.300 0v2.900l5.200 1c1.100 0.200 1.500 0.900 1.400 1.900l-0.700 4.700z" fill="#f4f4f4"/></svg><div class="t ti" style="left:403.500px;top:506.4px">播放元件片段</div>

<!-- table -->
<div class="a" style="left:545px;top:223px;width:381.500px;height:299.500px;background:#262626;border:1px solid #747474"></div>
<div class="a" style="left:546px;top:224px;width:379.500px;height:19px;background:#646464"></div>
<div class="a" style="left:546px;top:243.500px;width:379.500px;height:29px;background:#0a3759;border-bottom:1px solid #35526c"></div>
<div class="t th" style="left:566px">描述</div><div class="t th" style="left:675px">行为</div><div class="t th" style="left:791px">触发条件</div><div class="t th" style="left:870.500px">操作</div>
<div class="a" style="left:550px;top:248.500px;width:93.500px;height:18.500px;border:1px solid #7f94a6;background:#0a3455"></div>
<div class="t" style="left:676px;top:251.500px;width:60px;text-align:center;font-size:12px;color:#d6dde4;letter-spacing:-0.3px">下一页</div>
<div class="a" style="left:767px;top:248.500px;width:110.500px;height:19px;background:#565656"></div>
<div class="t" style="left:771px;top:251.500px;font-size:13px;color:#fff">点击</div>
<svg style="left:860px;top:248px" width="62" height="20" viewBox="860 248 62 20">
<path d="M864.300 253.800h6.200l-3.100 5.700z" fill="#f4f4f4"/>
<path d="M885 264.500l0.800-3.300 8.200-8.200 2.500 2.500-8.200 8.200z" fill="#f2f2f2"/><path d="M894.800 252.200l1.200-1.200 2.500 2.500-1.200 1.200z" fill="#f2f2f2"/>
<path d="M906.500 253.300l9.500 9.500M916 253.300l-9.500 9.500" stroke="#f4f4f4" stroke-width="2"/>
</svg>
<!-- dropdown -->
<div class="a" style="left:766.500px;top:267px;width:111.500px;height:359px;background:#555555;border:1px solid #7d8fb0"></div>
<div class="a op sel" style="top:268.50px">点击</div><div class="a op" style="top:286.36px">出现</div><div class="a op" style="top:304.22px">鼠标移入</div><div class="a op" style="top:322.08px">鼠标移出</div><div class="a op" style="top:339.94px">手指按下</div><div class="a op" style="top:357.80px">手指抬起</div><div class="a op" style="top:375.66px">向左滑动</div><div class="a op" style="top:393.52px">向右滑动</div><div class="a op" style="top:411.38px">向上滑动</div><div class="a op" style="top:429.24px">向下滑动</div><div class="a op" style="top:447.10px">向左上滑动</div><div class="a op" style="top:464.96px">向右上滑动</div><div class="a op" style="top:482.82px">向左下滑动</div><div class="a op" style="top:500.68px">向右下滑动</div><div class="a op" style="top:518.54px">摇一摇</div><div class="a op" style="top:536.40px">属性改变</div><div class="a op" style="top:554.26px">拖动/转动结束</div><div class="a op" style="top:572.12px">拖动物体放下</div><div class="a op" style="top:589.98px">拖动物体离开</div><div class="a op" style="top:607.84px">预置动画结束</div>
<!-- cursor -->
<svg style="left:798.200px;top:259.200px" width="14.400" height="19.800" viewBox="0 0 16 22"><path d="M1.500 1.500v15.800l3.700-3.500 2.600 6 2.700-1.200-2.600-5.800h5.200z" fill="#fff" stroke="#111" stroke-width="1.100" stroke-linejoin="round"/></svg>
<!-- ===== RIGHT PANEL ===== -->
<div class="a" style="left:970px;top:175px;width:297px;height:540px;background:#252525"></div>
<div class="a dots" style="left:970px;top:176px;width:297px;height:15px;background-color:#3e3e3e;background-position:2px 2.500px"></div>
<svg style="left:1253px;top:177.500px" width="12" height="12" viewBox="0 0 12 12"><path d="M2.300 2.300l7 6.600M9.300 2.300l-7 6.600" stroke="#f4f4f4" stroke-width="2.200"/></svg>
<div class="a" style="left:970px;top:214.500px;width:292px;height:500.500px;background:#555"></div>
<div class="a" style="left:972.500px;top:214.500px;width:1px;height:500.500px;background:#5f5f5f"></div>
<div class="a" style="left:972.5px;top:194px;width:50px;height:21px;background:#555;border:1px solid #6e6e6e;border-bottom:none"></div><div class="t" style="left:972.5px;top:198.500px;width:50px;text-align:center;font-size:12.500px;font-weight:bold;color:#f2f2f2;letter-spacing:-0.5px">属性</div>
<div class="a" style="left:1025.5px;top:194px;width:49px;height:20px;background:#242424;border:1px solid #6a6a6a;border-bottom:none"></div><div class="t" style="left:1025.5px;top:198.500px;width:49px;text-align:center;font-size:12.500px;font-weight:bold;color:#f2f2f2;letter-spacing:-0.5px">元件</div>
<div class="a" style="left:1078.5px;top:194px;width:49px;height:20px;background:#242424;border:1px solid #6a6a6a;border-bottom:none"></div><div class="t" style="left:1078.5px;top:198.500px;width:49px;text-align:center;font-size:12.500px;font-weight:bold;color:#f2f2f2;letter-spacing:-0.5px">翻页</div>
<div class="a" style="left:1131px;top:194px;width:49.5px;height:20px;background:#242424;border:1px solid #6a6a6a;border-bottom:none"></div><div class="t" style="left:1131px;top:198.500px;width:49.5px;text-align:center;font-size:12.500px;font-weight:bold;color:#f2f2f2;letter-spacing:-0.5px">分享</div>
<div class="a" style="left:1183.5px;top:194px;width:49.5px;height:20px;background:#242424;border:1px solid #6a6a6a;border-bottom:none"></div><div class="t" style="left:1183.5px;top:198.500px;width:49.5px;text-align:center;font-size:12.500px;font-weight:bold;color:#f2f2f2;letter-spacing:-0.5px">加载</div>

<!-- right scrollbar -->
<div class="a" style="left:1262px;top:214.500px;width:5px;height:500.500px;background:#343434"></div>
<div class="a" style="left:1262px;top:215px;width:5px;height:289px;background:#7c7c7c"></div>
<!-- qq -->
<div class="a" style="left:1238px;top:218px;width:29px;height:29.500px;background:#ff9632;border-radius:3px 0 0 3px"></div>
<svg style="left:1247.300px;top:223.500px" width="18" height="21" viewBox="0 0 22 24" preserveAspectRatio="none"><path d="M11 1.500c3.500 0 5.300 2.800 5.300 6.200 0 1 0.200 1.800 0.800 2.800 1 1.600 2 3.600 1.600 5.300-0.300 0.700-1-0.200-1.500-1.200-0.200 1.400-0.800 2.400-1.800 3.200 0.900 0.400 1.500 0.900 1.500 1.500 0 0.900-2 1.200-3.200 1.200-1.100 0-2.100-0.300-2.700-0.700-0.600 0.400-1.600 0.700-2.700 0.700-1.200 0-3.200-0.300-3.200-1.200 0-0.600 0.600-1.100 1.500-1.500-1-0.800-1.600-1.800-1.800-3.200-0.500 1-1.200 1.900-1.500 1.200-0.400-1.700 0.600-3.700 1.600-5.300 0.600-1 0.800-1.800 0.800-2.800 0-3.400 1.800-6.200 5.300-6.200z" fill="#fff"/><ellipse cx="9.300" cy="6.500" rx="0.900" ry="1.300" fill="#ffd9b0"/><ellipse cx="12.700" cy="6.500" rx="0.900" ry="1.300" fill="#ffd9b0"/></svg>
<!-- thumbnail -->
<div class="a" style="left:981.500px;top:241px;width:50px;height:50px;background:conic-gradient(#cfcfcf 25%,#fff 0 50%,#cfcfcf 0 75%,#fff 0) 0 0/16.660px 16.660px"></div>
<div class="a" style="left:988.500px;top:261px;width:36px;height:8.500px;background:#f0a50c"></div>
<div class="t" style="left:988.500px;top:263.500px;width:36px;text-align:center;font-size:4px;letter-spacing:1.500px;color:#fbe6b0">MUGEDA</div>
<div class="t" style="left:1041px;top:245px;font-size:12px;font-weight:bold;color:#f0f0f0;letter-spacing:-0.4px">图像</div>
<div class="a" style="left:1041px;top:274px;width:75px;height:18px;background:#464646;border:1px solid #5f5f5f"></div>
<div class="t" style="left:1046.500px;top:276.500px;font-size:13px;color:#7c7c7c">名称</div>
<div class="t pl" style="top:315.5px">宽:</div><div class="a pin" style="left:1021.500px;top:311.8px;width:74.500px;height:17.500px"></div><div class="t pv" style="left:1026.500px;top:314.0px">320.0</div><div class="t pl" style="left:1100.500px;top:315.5px">像素</div><svg style="left:1167.5px;top:313.2px" width="15" height="15" viewBox="0 0 15 15"><path d="M6.300 8.700a2.700 2.700 0 0 1 0-3.800l2.600-2.600a2.700 2.700 0 0 1 3.800 3.800l-1.300 1.300M8.700 6.300a2.700 2.700 0 0 1 0 3.800l-2.600 2.600a2.700 2.700 0 0 1-3.800-3.800l1.300-1.300" fill="none" stroke="#ededed" stroke-width="1.700" stroke-linecap="round"/></svg>
<div class="t pl" style="top:351.4px">高:</div><div class="a pin" style="left:1021.500px;top:347.7px;width:74.500px;height:17.500px"></div><div class="t pv" style="left:1026.500px;top:349.9px">65.0</div><div class="t pl" style="left:1100.500px;top:351.4px">像素</div><svg style="left:1167.5px;top:349.09999999999997px" width="15" height="15" viewBox="0 0 15 15"><path d="M6.300 8.700a2.700 2.700 0 0 1 0-3.800l2.600-2.600a2.700 2.700 0 0 1 3.800 3.800l-1.300 1.300M8.700 6.300a2.700 2.700 0 0 1 0 3.800l-2.600 2.600a2.700 2.700 0 0 1-3.800-3.800l1.300-1.300" fill="none" stroke="#ededed" stroke-width="1.700" stroke-linecap="round"/></svg>
<div class="t pl" style="top:386px">左:</div><div class="a pin" style="left:1021.500px;top:382.3px;width:74.500px;height:17.500px"></div><div class="t pv" style="left:1026.500px;top:384.5px">0.0</div><div class="t pl" style="left:1100.500px;top:386px">像素</div><svg style="left:1144px;top:383.7px" width="15" height="15" viewBox="0 0 15 15"><path d="M6.300 8.700a2.700 2.700 0 0 1 0-3.800l2.600-2.600a2.700 2.700 0 0 1 3.800 3.800l-1.300 1.300M8.700 6.300a2.700 2.700 0 0 1 0 3.800l-2.600 2.600a2.700 2.700 0 0 1-3.800-3.800l1.300-1.300" fill="none" stroke="#ededed" stroke-width="1.700" stroke-linecap="round"/></svg>
<div class="t pl" style="top:417.8px">上:</div><div class="a pin" style="left:1021.500px;top:414.1px;width:74.500px;height:17.500px"></div><div class="t pv" style="left:1026.500px;top:416.3px">227.5</div><div class="t pl" style="left:1100.500px;top:417.8px">像素</div><svg style="left:1144px;top:415.5px" width="15" height="15" viewBox="0 0 15 15"><path d="M6.300 8.700a2.700 2.700 0 0 1 0-3.800l2.600-2.600a2.700 2.700 0 0 1 3.800 3.800l-1.300 1.300M8.700 6.300a2.700 2.700 0 0 1 0 3.800l-2.600 2.600a2.700 2.700 0 0 1-3.800-3.800l1.300-1.300" fill="none" stroke="#ededed" stroke-width="1.700" stroke-linecap="round"/></svg>

<svg style="left:1128px;top:318px" width="20" height="42" viewBox="1128 318 20 42">
<path d="M1130 322h9v6.500M1130 355.600h9v-6" fill="none" stroke="#c8c8c8" stroke-width="1.200"/>
<rect x="1132" y="337" width="13.300" height="9.500" rx="1.500" fill="#f0f0f0"/><path d="M1134.800 337v-2.300a3.800 3.800 0 0 1 7.600 0v2.300" fill="none" stroke="#f0f0f0" stroke-width="1.900"/><circle cx="1138.600" cy="340.700" r="1.400" fill="#555"/><rect x="1138" y="341" width="1.300" height="3.300" fill="#555"/>
</svg>
<div class="t pv" style="left:981.500px;top:443px;color:#ececec">+</div>
<div class="t pv" style="left:998px;top:443.500px;color:#ececec;font-size:13px;letter-spacing:-0.2px">X:335</div>
<div class="t pv" style="left:1049.500px;top:443.500px;color:#ececec;font-size:13px;letter-spacing:-0.2px">Y:286</div>
<div class="a" style="left:981px;top:475.500px;width:266px;height:1px;background:#666"></div>
<!-- opacity -->
<div class="t pl" style="top:500.500px">透明度:</div>
<div class="a" style="left:1061px;top:495px;width:20px;height:20px;background:conic-gradient(#dcdcdc 25%,#fff 0 50%,#dcdcdc 0 75%,#fff 0) 0 0/5px 5px"></div>
<div class="a" style="left:1084.500px;top:495px;width:28.500px;height:20px;background:#fff"></div>
<div class="t pv" style="left:1087.500px;top:498.500px;color:#2a2a2a;transform:scaleX(.84);transform-origin:0 0">100</div>
<div class="a" style="left:1114.500px;top:495px;width:11.500px;height:20px;background:linear-gradient(#e4e4e4,#c0c0c0);border-radius:1px"></div>
<svg style="left:1114.500px;top:495px" width="12" height="20" viewBox="0 0 12 20"><path d="M3 9h5.600l-2.800 3.600z" fill="#222"/></svg>
<svg style="left:1139.5px;top:497.5px" width="15" height="15" viewBox="0 0 15 15"><path d="M6.300 8.700a2.700 2.700 0 0 1 0-3.800l2.600-2.600a2.700 2.700 0 0 1 3.800 3.800l-1.300 1.300M8.700 6.300a2.700 2.700 0 0 1 0 3.800l-2.600 2.600a2.700 2.700 0 0 1-3.800-3.800l1.300-1.300" fill="none" stroke="#ededed" stroke-width="1.700" stroke-linecap="round"/></svg>
<!-- perspective -->
<div class="t pl" style="top:531.500px">透视度:</div>
<div class="a" style="left:1062.500px;top:535px;width:63.500px;height:5px;background:#8e8e8e;border-radius:2.500px"></div>
<div class="a" style="left:1073.500px;top:529.400px;width:16px;height:16px;background:#f4f4f4;border-radius:50%"></div>
<div class="t pv" style="left:1131px;top:529.500px;color:#e4e8f0;transform:scaleX(.86);transform-origin:0 0">25</div>
<svg style="left:1161.5px;top:528px" width="15" height="15" viewBox="0 0 15 15"><path d="M6.300 8.700a2.700 2.700 0 0 1 0-3.800l2.600-2.600a2.700 2.700 0 0 1 3.800 3.800l-1.300 1.300M8.700 6.300a2.700 2.700 0 0 1 0 3.800l-2.600 2.600a2.700 2.700 0 0 1-3.800-3.800l1.300-1.300" fill="none" stroke="#ededed" stroke-width="1.700" stroke-linecap="round"/></svg>
<div class="t pl" style="top:564.5px">旋转:</div><div class="a pin" style="left:1082.500px;top:558.2px;width:55.500px;height:18px"></div><div class="t pv" style="left:1088px;top:560.5px">0</div><svg style="left:1161.5px;top:559.0px" width="15" height="15" viewBox="0 0 15 15"><path d="M6.300 8.700a2.700 2.700 0 0 1 0-3.800l2.600-2.600a2.700 2.700 0 0 1 3.800 3.800l-1.300 1.300M8.700 6.300a2.700 2.700 0 0 1 0 3.800l-2.600 2.600a2.700 2.700 0 0 1-3.800-3.800l1.300-1.300" fill="none" stroke="#ededed" stroke-width="1.700" stroke-linecap="round"/></svg><svg style="left:1061px;top:559.5px" width="20" height="20" viewBox="0 0 20 20"><path d="M12.200 4.600a6.600 6.600 0 1 0 4.300 4.800" fill="none" stroke="#d0d0d0" stroke-width="1.500"/><path d="M10 1.300l4.600 3-4.300 3z" fill="#d0d0d0"/></svg>
<div class="t pl" style="top:596px">X轴旋转:</div><div class="a pin" style="left:1082.500px;top:589.7px;width:55.500px;height:18px"></div><div class="t pv" style="left:1088px;top:592px">0</div><svg style="left:1161.5px;top:590.5px" width="15" height="15" viewBox="0 0 15 15"><path d="M6.300 8.700a2.700 2.700 0 0 1 0-3.800l2.600-2.600a2.700 2.700 0 0 1 3.800 3.800l-1.300 1.300M8.700 6.300a2.700 2.700 0 0 1 0 3.800l-2.600 2.600a2.700 2.700 0 0 1-3.800-3.800l1.300-1.300" fill="none" stroke="#ededed" stroke-width="1.700" stroke-linecap="round"/></svg><svg style="left:1061px;top:591px" width="20" height="20" viewBox="0 0 20 20"><path d="M1 10h16.500" stroke="#d0d0d0" stroke-width="1.500"/><path d="M12 2.800a7.200 7.200 0 0 0 0 14.600" fill="none" stroke="#d0d0d0" stroke-width="1.600"/><path d="M11 0.600l4.300 2.300-4 2.700z" fill="#d0d0d0"/></svg>
<div class="t pl" style="top:627.3px">Y轴旋转:</div><div class="a pin" style="left:1082.500px;top:621.0px;width:55.500px;height:18px"></div><div class="t pv" style="left:1088px;top:623.3px">0</div><svg style="left:1161.5px;top:621.8px" width="15" height="15" viewBox="0 0 15 15"><path d="M6.300 8.700a2.700 2.700 0 0 1 0-3.800l2.600-2.600a2.700 2.700 0 0 1 3.800 3.800l-1.300 1.300M8.700 6.300a2.700 2.700 0 0 1 0 3.800l-2.600 2.600a2.700 2.700 0 0 1-3.800-3.800l1.300-1.300" fill="none" stroke="#ededed" stroke-width="1.700" stroke-linecap="round"/></svg><svg style="left:1061px;top:622.3px" width="20" height="20" viewBox="0 0 20 20"><path d="M10.500 1.500v18" stroke="#d0d0d0" stroke-width="1.500"/><path d="M3 7.500a7.500 7.500 0 0 0 15 0" fill="none" stroke="#d0d0d0" stroke-width="1.600"/><path d="M0.600 9l2.400-4.300 2.600 4.300z" fill="#d0d0d0"/></svg>

<div class="t pl" style="top:661px">拖动/旋转:</div>
<div class="a pin" style="left:1060.500px;top:652.800px;width:95px;height:20px;border:1px solid #626262"></div>
<div class="t" style="left:1066px;top:656.800px;font-size:12.500px;color:#f2f2f2;letter-spacing:-0.3px">不允许</div>
<svg style="left:1142.500px;top:659px" width="9" height="8" viewBox="0 0 9 8"><path d="M0.800 1h6.800l-3.400 5.800z" fill="#f2f2f2"/></svg>
<div class="t pl" style="top:690.800px">结束时复位:</div>
<div class="a" style="left:1050px;top:689.700px;width:13px;height:13px;border-radius:50%;background:#878787"></div>
<div class="t" style="left:1050px;top:691.500px;width:13px;text-align:center;font-size:10.500px;font-weight:bold;color:#e6e6e6">?</div>
<div class="a" style="left:1118px;top:692.500px;width:31px;height:7.500px;background:#9c9c9c;border-radius:4px"></div>
<div class="a" style="left:1112px;top:688.500px;width:15.500px;height:15.500px;background:#c6c6c6;border-radius:50%"></div>
<!-- window edges -->
<div class="a" style="left:0;top:714px;width:1269px;height:4px;background:#e6e6e6;border-top:1.500px solid #fff"></div>
<div class="a" style="left:1267px;top:0;width:2px;height:718px;background:#e8eef4"></div>
</body>
</html>
